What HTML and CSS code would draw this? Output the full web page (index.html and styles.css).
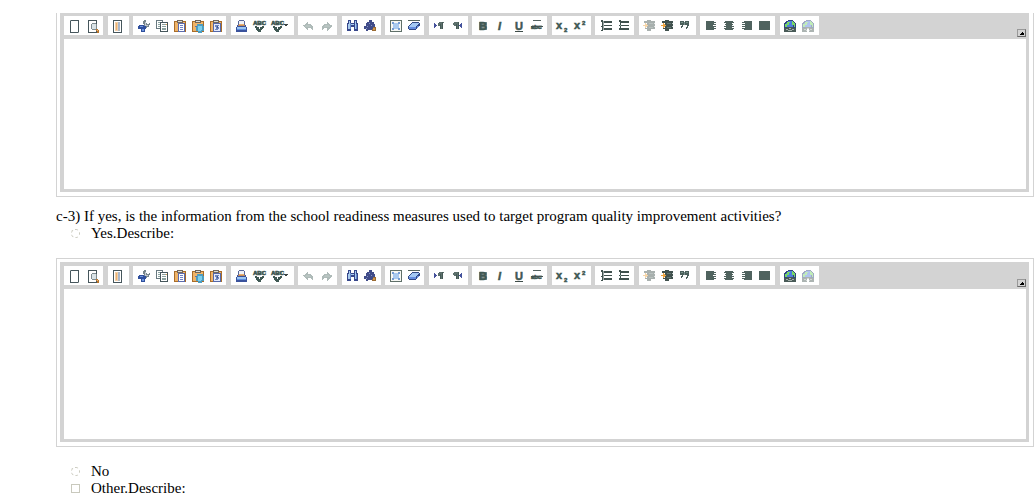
FILE: index.html
```html
<!doctype html>
<html lang="en">
<head>
<meta charset="utf-8">
<title>Program quality improvement</title>
<link rel="stylesheet" href="styles.css">
</head>
<body>
<svg class="sprites" aria-hidden="true">
  <symbol id="i-new" viewBox="0 0 18 19">
    <path d="M5.5 4.5h8v12h-8z" fill="#fff" stroke="#46565c"/>
    <path d="M5 4h1v1H5zM13 16h1v1h-1z" fill="#8e989b"/>
  </symbol>
  <symbol id="i-preview" viewBox="0 0 18 19">
    <path d="M5.5 4.5h8v12h-8z" fill="#fff" stroke="#46565c"/>
    <path d="M9 7h4v1h1v5h-1v1H9v-1H8V8h1z" fill="#7e8b90"/>
    <path d="M9 8h4v5H9z" fill="#d9e2e6"/>
    <path d="M13 13h2v1h1v3h-2v-2h-1z" fill="#b8752e"/>
    <path d="M14 14h1v1h-1z" fill="#f0b468"/>
  </symbol>
  <symbol id="i-templates" viewBox="0 0 18 19">
    <path d="M4.5 4.5h8v12h-8z" fill="#fff" stroke="#46565c"/>
    <path d="M6 6h3v9H6z" fill="#f3cfa6"/>
    <path d="M7 7h1v7H7z" fill="#e8b070"/>
    <path d="M9 6h2v9H9z" fill="#a9b6ca"/>
  </symbol>
  <symbol id="i-cut" viewBox="0 0 18 19">
    <path d="M10 4h2v3h1v1h2V7h1v2h-1v2h-2v1h-2v-2h-1V8H9V5h1z" fill="#78868b"/>
    <path d="M11 6h1v3h2v1h-3z" fill="#c4cbd0"/>
    <path d="M5 9h5v1h2v3h-1v3H7v-3H4v-3h1z" fill="#2f4f9d"/>
    <path d="M6 10h3v1H6zM8 13h2v2H8z" fill="#6c94dc"/>
  </symbol>
  <symbol id="i-copy" viewBox="0 0 18 19">
    <path d="M4.5 4.5h6v8h-6z" fill="#fff" stroke="#687980"/>
    <path d="M6 6h3v1H6zM6 8h3v1H6zM6 10h3v1H6z" fill="#8ea7a5"/>
    <path d="M8.5 6.5h7v9h-7z" fill="#fff" stroke="#46565c"/>
    <path d="M10 8h4v1h-4zM10 10h4v1h-4zM10 12h4v2h-4z" fill="#8aa09d"/>
    <path d="M14 8h1v1h-1z" fill="#e8a24e"/>
  </symbol>
  <symbol id="i-clipboard" viewBox="0 0 18 19">
    <path d="M4 5h12v11H4z" fill="#a96d2a"/>
    <path d="M5 6h10v9H5z" fill="#f0b468"/>
    <path d="M7 4h6v3H7z" fill="#70665a"/>
    <path d="M8 5h4v1H8z" fill="#dcdcd4"/>
  </symbol>
  <symbol id="i-paste" viewBox="0 0 18 19">
    <use href="#i-clipboard"/>
    <path d="M8.5 7.5h6v8h-6z" fill="#fff" stroke="#5c6cae"/>
    <path d="M10 9h3v1h-3zM10 11h3v1h-3zM10 13h3v1h-3z" fill="#6e82c8"/>
  </symbol>
  <symbol id="i-pastetext" viewBox="0 0 18 19">
    <use href="#i-clipboard"/>
    <path d="M9 8h6v2h1v5h-2v2h-4v-2H8v-4h1z" fill="#4d9dc0"/>
    <path d="M10 10h4v4h-1v1h-3z" fill="#7cd0ee"/>
    <path d="M7 10h2v1H7z" fill="#5275b5"/>
  </symbol>
  <symbol id="i-pasteword" viewBox="0 0 18 19">
    <use href="#i-clipboard"/>
    <path d="M7.5 7.5h7v8h-7z" fill="#e5ebfb" stroke="#5568a8"/>
    <path d="M9 9h4v1h-1v1h1v2h-1v1h-3v-1h1v-2H9z" fill="#6f86bd"/>
    <path d="M11 10h1v2h-1z" fill="#3f5799"/>
  </symbol>
  <symbol id="i-print" viewBox="0 0 18 19">
    <path d="M7 4h5v1h1v5H6V5h1z" fill="#59689a"/>
    <path d="M7 5h5v4H7z" fill="#eef1f6"/>
    <path d="M7 8h5v1H7z" fill="#eab071"/>
    <path d="M5 9h1v1h7V9h1v2h1v5H4v-5h1z" fill="#3a529c"/>
    <path d="M5 11h9v2H5z" fill="#9ac5f2"/>
    <path d="M5 13h9v1H5z" fill="#5b8de0"/>
    <path d="M6 9h7v1H6z" fill="#c48c56"/>
  </symbol>
  <symbol id="i-spell" viewBox="0 0 18 19">
    <path d="M4 5h10v4H4z" fill="#4c625e" opacity=".4"/>
    <text x="3" y="9" class="tiny">ABC</text>
    <path d="M5 10h2v1h2v2h1v-2h2v-1h2v2h-1v1h-1v1h-1v2H8v-1H7v-1H6v-2H5z" fill="#3f5853"/>
  </symbol>
  <symbol id="i-scayt" viewBox="0 0 24 19">
    <path d="M4 5h10v4H4z" fill="#4c625e" opacity=".4"/>
    <text x="3" y="9" class="tiny">ABC</text>
    <path d="M5 10h2v1h2v2h1v-2h2v-1h2v2h-1v1h-1v1h-1v2H8v-1H7v-1H6v-2H5z" fill="#3f5853"/>
    <path d="M16 8h4v1h-1v1h-2V9h-1z" fill="#3b4543"/>
  </symbol>
  <symbol id="i-undo" viewBox="0 0 18 19">
    <path d="M8 6h1v2h3v1h1v1h1v4h-1v-1h-1v-1H9v2H8v-1H7v-1H6v-1H5v-1H4V9h2V8h1V7h1z" fill="#aebab8"/>
    <path d="M7 9h4v1h1v1H6v-1h1z" fill="#b8c4c1"/>
  </symbol>
  <symbol id="i-redo" viewBox="0 0 18 19">
    <path d="M10 6h1v1h1v1h1v1h2v2h-1v1h-1v1h-1v1h-1v1h-1v-3H7v1H6v1H5v-4h1V9h1V8h3z" fill="#aebab8"/>
    <path d="M8 9h4v1h1v1H7v-1h1z" fill="#b8c4c1"/>
  </symbol>
  <symbol id="i-find" viewBox="0 0 18 19">
    <path d="M5 4h3v3h3V4h3v3h1v8h-4v-4H8v4H4V7h1z" fill="#37478b"/>
    <path d="M6 5h1v8H5V8h1zM12 5h1v8h-1zM8 8h3v1H8z" fill="#a8cbed"/>
    <path d="M7 7h1v6H7zM13 8h1v5h-1z" fill="#6488cc"/>
  </symbol>
  <symbol id="i-replace" viewBox="0 0 18 19">
    <path d="M8 4h3v2h2v2h1v6H7v1H5v-2H3v-3h2V7h1V6h2z" fill="#414c89"/>
    <path d="M8 7h1v1H8zM6 10h1v1H6zM10 9h1v1h-1zM5 12h1v1H5z" fill="#8394c5"/>
    <path d="M12 11h3v4h-4v-2h1z" fill="#9a6a32"/>
    <path d="M12 12h2v2h-2z" fill="#cf994f"/>
  </symbol>
  <symbol id="i-selectall" viewBox="0 0 18 19">
    <path d="M4.5 4.5h11v11h-11z" fill="#f7f8f4" stroke="#607069"/>
    <path d="M6 6h2v1h4V6h2v2h-1v4h1v2h-2v-1H8v1H6v-2h1V8H6z" fill="#739bd2"/>
    <path d="M8 7h4v1h1v4h-1v1H8v-1H7V8h1z" fill="#a9caf0"/>
  </symbol>
  <symbol id="i-eraser" viewBox="0 0 18 19">
    <path d="M4 4h12v1H4z" fill="#56655f"/>
    <path d="M8 6h7v1h1v3h-1v1h-1v1h-1v1h-1v1H5v-1H4v-3h1V9h1V8h1V7h1z" fill="#324985"/>
    <path d="M8 7h7v1h-1v1h-1v1h-1v1H5v-1h1V9h1V8h1z" fill="#a3c8f5"/>
    <path d="M5 11h7v2H5zM13 10h2v1h-1v1h-1z" fill="#648ce0"/>
  </symbol>
  <symbol id="i-ltr" viewBox="0 0 18 19">
    <path d="M4 7h1v1h1v1h1v1H6v1H5v1H4z" fill="#45529c"/>
    <path d="M9 6h5v1h-1v6h-3v-3H8V7h1z" fill="#5d706c"/>
    <path d="M10 8h1v5h-1zM12 6h1v7h-1z" fill="#455a56"/>
  </symbol>
  <symbol id="i-rtl" viewBox="0 0 18 19">
    <path d="M6 6h5v7H8v-3H6V9H5V7h1z" fill="#5d706c"/>
    <path d="M8 8h1v5H8zM10 6h1v7h-1z" fill="#455a56"/>
    <path d="M13 7h1v5h-1v-1h-1v-1h-1V9h1V8h1z" fill="#45529c"/>
  </symbol>
  <symbol id="i-bold" viewBox="0 0 18 19">
    <path d="M6 6h8v8H6z" fill="#4c625f" opacity=".7"/>
    <text x="6" y="14" class="letter">B</text>
  </symbol>
  <symbol id="i-italic" viewBox="0 0 18 19">
    <text x="7" y="14" class="letter slant">I</text>
  </symbol>
  <symbol id="i-underline" viewBox="0 0 18 19">
    <text x="6" y="14" class="letter">U</text>
    <path d="M6 15h8v1H6z" fill="#3e4c49"/>
  </symbol>
  <symbol id="i-strike" viewBox="0 0 18 19">
    <path d="M6 4h8v1H6z" fill="#53625f"/>
    <path d="M5 9h10v4H5z" fill="#4c625e" opacity=".4"/>
    <text x="4" y="13" class="tiny">abc</text>
    <path d="M4 10h12v1H4z" fill="#43524f"/>
  </symbol>
  <symbol id="i-sub" viewBox="0 0 18 19">
    <text x="3" y="13" class="letter">x</text>
    <text x="11" y="16" class="tiny">2</text>
  </symbol>
  <symbol id="i-sup" viewBox="0 0 18 19">
    <text x="3" y="13" class="letter">x</text>
    <text x="11" y="9" class="tiny">2</text>
  </symbol>
  <symbol id="i-numlist" viewBox="0 0 18 19">
    <path d="M5 4h2v11H5v-1h1v-3H5v-1h1V6H5zM8 5h8v2H8zM8 9h8v1H8zM8 12h8v2H8z" fill="#40514e"/>
    <path d="M7 5h1v9H7z" fill="#98a4a1"/>
  </symbol>
  <symbol id="i-bullist" viewBox="0 0 18 19">
    <path d="M5 4h2v1h8v2H7v2h8v1H7v2h8v2H5v-2h1v-2H5V9h1V6H5z" fill="#40514e"/>
    <path d="M6 9h1v1H6z" fill="#89a39b"/>
  </symbol>
  <symbol id="i-indent" viewBox="0 0 18 19">
    <path d="M7 4h4v1h4v8h-4v2H7v-2H5v-1h2V7H4V5h3z" fill="#40514e"/>
    <path d="M9 7h4v1H9zM9 11h4v1H9z" fill="#647772"/>
    <path d="M14 7h1v1h-1zM14 10h1v1h-1z" fill="#c6d0cd"/>
    <path d="M5 7h1v1h1v1h1v1H7v1H6v1H5v-2H3V9h2z" fill="#eda440"/>
  </symbol>
  <symbol id="i-quote" viewBox="0 0 18 19">
    <path d="M4 5h4v4H7v2H6v1H5v-2h1V9H4zM9 5h4v5h-1v2h-1v1h-1v-2h1V9H9z" fill="#4b605c"/>
    <path d="M8 6h1v3H8zM5 6h2v1H5zM10 6h2v1h-2z" fill="#78908a"/>
  </symbol>
  <symbol id="i-left" viewBox="0 0 18 19">
    <path d="M5 5h8v1h2v1h-2v1h2v1h-3v1h3v1h-2v1h2v1h-2v1H5z" fill="#50635f"/>
  </symbol>
  <symbol id="i-center" viewBox="0 0 18 19">
    <path d="M6 5h8v1h1v1h-2v1h1v1h-1v1h2v1h-2v1h2v1h-1v1H6v-1H5v-1h2v-1H5v-1h2V9H6V8h1V7H5V6h1z" fill="#50635f"/>
  </symbol>
  <symbol id="i-right" viewBox="0 0 18 19">
    <path d="M7 5h8v9H7v-1H5v-1h3v-1H5v-1h3V9H5V8h3V7H5V6h2z" fill="#50635f"/>
  </symbol>
  <symbol id="i-justify" viewBox="0 0 18 19">
    <path d="M4 5h11v9H4z" fill="#50635f"/>
  </symbol>
  <symbol id="i-link" viewBox="0 0 18 19">
    <path d="M7 4h5v1h1v1h1v1h1v5H3V7h1V6h1V5h2z" fill="#30467e"/>
    <path d="M7 5h4v1h1v5H5V7h2z" fill="#4f7ddd"/>
    <path d="M6 6h3v1H8v2H6v2H4V8h2zM11 5h1v1h1v1h1v4h-1V9h-2z" fill="#77d965"/>
    <path d="M3 12h3v-1h6v1h3v4H3z" fill="#485a57"/>
    <path d="M5 13h2v1H5zM8 12h2v1H8zM11 13h2v1h-2zM7 14h4v1H7z" fill="#a2afaa"/>
  </symbol>
  <symbol id="i-unlink" viewBox="0 0 18 19">
    <use href="#i-link"/>
    <path d="M8 13h2v3H8z" fill="#fff"/>
  </symbol>
</svg>

<form>
<div class="editor cut-off">
  <div class="inner">
    <div class="toolbar"></div>
    <textarea aria-label="Describe"></textarea>
  </div>
</div>

<p class="question">c-3) If yes, is the information from the school readiness measures used to target program quality improvement activities?</p>
<label class="option"><input type="radio" name="c3">Yes.Describe:</label>

<div class="editor">
  <div class="inner">
    <div class="toolbar"></div>
    <textarea aria-label="Yes, describe"></textarea>
  </div>
</div>

<label class="option"><input type="radio" name="c3">No</label>
<label class="option"><input type="checkbox" name="c3other">Other.Describe:</label>
</form>

<script type="text/javascript">
// icon id : label, one array per group
var groups = [
    ['new:New Page', 'preview:Preview'],
    ['templates:Templates'],
    ['cut:Cut', 'copy:Copy', 'paste:Paste', 'pastetext:Paste as plain text', 'pasteword:Paste from Word'],
    ['print:Print', 'spell:Check Spelling', 'scayt:Spell Check As You Type'],
    ['undo:Undo', 'redo:Redo'],
    ['find:Find', 'replace:Replace'],
    ['selectall:Select All', 'eraser:Remove Format'],
    ['ltr:Left to right', 'rtl:Right to left'],
    ['bold:Bold', 'italic:Italic', 'underline:Underline', 'strike:Strike Through'],
    ['sub:Subscript', 'sup:Superscript'],
    ['numlist:Numbered List', 'bullist:Bulleted List'],
    ['indent:Decrease Indent:off', 'indent:Increase Indent', 'quote:Block Quote'],
    ['left:Left Justify', 'center:Center Justify', 'right:Right Justify', 'justify:Block Justify'],
    ['link:Link', 'unlink:Unlink:off']
];
function buildToolbar(bar) {
    var html = '';
    for(var i = 0; i < groups.length; i++) {
        html += '<div class="group">';
        for(var j = 0; j < groups[i].length; j++) {
            var b = groups[i][j].split(':');
            html += '<button type="button" class="tool ' + b[0] + (b[2] ? ' off' : '') +
                '" aria-label="' + b[1] + '"><svg><use href="#i-' + b[0] + '"/></svg></button>';
        }
        html += '</div>';
    }
    html += '<button type="button" class="collapse" aria-label="Collapse Toolbar">' +
        '<svg viewBox="0 0 7 6"><path d="M4 2h1v1h1v2H2V4h1V3h1z"/></svg></button>';
    bar.innerHTML = html;
}
var bars = document.querySelectorAll('.toolbar');
for(var i = 0; i < bars.length; i++) {
    buildToolbar(bars[i]);
}
</script>
</body>
</html>
```
FILE: styles.css
```css
body {
    margin: 13px 0 0 56px;
    background: #fff;
    color: #000;
    font: 15px/17px "Liberation Serif", "Times New Roman", serif;
}
.sprites {
    display: none;
}
.editor {
    margin: 16px 0;
    padding: 3px 4px 4px 3px;
    border: 1px solid #d3d3d3;
}
.editor.cut-off {
    margin: 0 0 11px;
    padding-top: 0;
    border-top: 0;
}
.inner {
    padding: 4px 3px 3px 4px;
    background: #d3d3d3;
}
.cut-off .inner {
    padding-top: 3px;
}
.toolbar {
    display: flex;
    padding-bottom: 4px;
}
.group {
    display: flex;
    padding: 0 2px 0 1px;
    margin-right: 5px;
    background: #fff;
}
.group:nth-child(even) {
    margin-right: 4px;
}
.tool {
    width: 18px;
    height: 19px;
    padding: 0;
    border: 0;
    background: none;
}
.tool.scayt {
    width: 24px;
}
.tool.off {
    opacity: 0.45;
}
.tool svg {
    display: block;
    width: 100%;
    height: 19px;
    shape-rendering: crispEdges;
}
.tiny,
.letter {
    font: bold 6px "Liberation Sans", Arial, sans-serif;
    fill: #3f5853;
    stroke: #3f5853;
    stroke-width: 0.5px;
}
.letter {
    font-size: 11px;
}
.slant {
    font-style: italic;
}
.collapse {
    align-self: flex-end;
    width: 9px;
    height: 8px;
    margin: 0 0 -2px auto;
    padding: 0;
    border: 1px solid #696969;
    border-top-color: #999;
    border-left-color: #999;
    background: #d3d3d3;
}
.collapse svg {
    display: block;
    width: 7px;
    height: 6px;
    shape-rendering: crispEdges;
}
textarea {
    display: block;
    box-sizing: border-box;
    width: 100%;
    height: 150px;
    padding: 4px;
    border: 0;
    background: #fff;
    font: inherit;
    resize: none;
}
.question {
    margin: 0;
}
.option {
    display: flex;
    align-items: center;
    padding-left: 15px;
    gap: 11px;
}
.option input {
    appearance: none;
    width: 9px;
    height: 9px;
    margin: 0;
    border: 1px solid #c9c9bd;
}
.option input[type="radio"] {
    border-style: dashed;
    border-radius: 50%;
}
```
